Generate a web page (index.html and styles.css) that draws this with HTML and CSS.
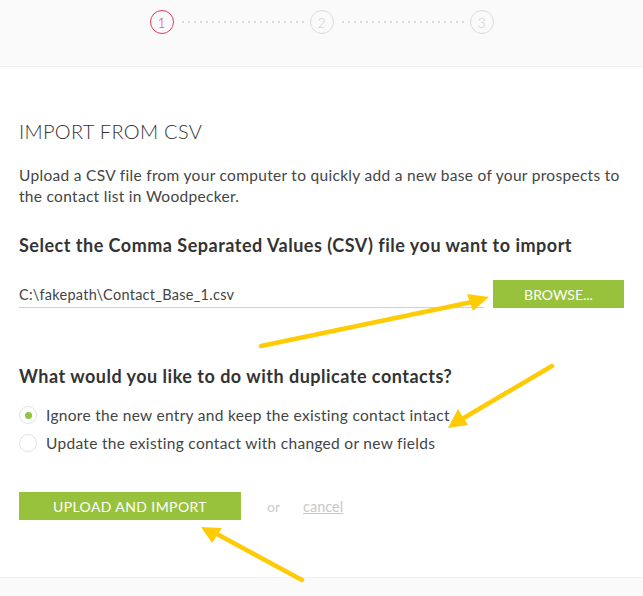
FILE: index.html
```html
<!DOCTYPE html>
<html>
<head>
<meta charset="utf-8">
<link rel="stylesheet" href="styles.css">
</head>
<body>
<div class="page">
  <header class="steps-bar">
    <div class="steps">
      <span class="step active">1</span>
      <span class="dots"></span>
      <span class="step">2</span>
      <span class="dots"></span>
      <span class="step">3</span>
    </div>
  </header>
  <main class="content">
    <h1 class="title">IMPORT FROM CSV</h1>
    <p class="intro">Upload a CSV file from your computer to quickly add a new base of your prospects to the contact list in Woodpecker.</p>
    <h2 class="heading">Select the Comma Separated Values (CSV) file you want to import</h2>
    <div class="file-row">
      <div class="file-input">C:\fakepath\Contact_Base_1.csv</div>
      <button class="btn browse">BROWSE...</button>
    </div>
    <h2 class="heading dup">What would you like to do with duplicate contacts?</h2>
    <div class="options">
      <label class="option"><span class="radio checked"></span>Ignore the new entry and keep the existing contact intact</label>
      <label class="option"><span class="radio"></span>Update the existing contact with changed or new fields</label>
    </div>
    <div class="actions">
      <button class="btn upload">UPLOAD AND IMPORT</button>
      <span class="or">or</span>
      <a class="cancel" href="#">cancel</a>
    </div>
  </main>
  <footer class="footer"></footer>
  <svg class="arrows" width="643" height="596" viewBox="0 0 643 596">
    <g stroke="#ffcb05" stroke-width="4.5" stroke-linecap="round" fill="none">
      <line x1="261" y1="346" x2="472" y2="302"/>
      <line x1="552" y1="366" x2="462" y2="419"/>
      <line x1="302" y1="580" x2="215" y2="533"/>
    </g>
    <g fill="#ffcb05">
      <polygon points="489,297 467,294 473,311"/>
      <polygon points="448,428 458,409 468,425"/>
      <polygon points="201,527 222,528 212,543"/>
    </g>
  </svg>
</div>
</body>
</html>
```
FILE: styles.css
```css
* { box-sizing: border-box; }
html, body { margin: 0; padding: 0; background: #fff; }
body {
  font-family: "Lato", "Liberation Sans", sans-serif;
  color: #333;
  width: 643px;
  height: 596px;
  overflow: hidden;
}
.page {
  position: relative;
  width: 643px;
  height: 596px;
  display: flex;
  flex-direction: column;
}
.steps-bar {
  height: 67px;
  background: #fafafa;
  border-bottom: 1px solid #f0f0f0;
  display: flex;
  justify-content: center;
  padding-top: 10px;
}
.steps {
  display: flex;
  align-items: center;
  height: 24px;
  gap: 6px;
}
.step {
  width: 24px;
  height: 24px;
  border-radius: 50%;
  border: 1.5px solid #dcdcdc;
  color: #cfcfcf;
  font-size: 14px;
  font-weight: 300;
  display: flex;
  align-items: center;
  justify-content: center;
}
.step.active {
  border-color: #e3365c;
  color: #e3365c;
}
.dots {
  width: 124px;
  height: 2px;
  background-image: radial-gradient(circle, #d8d8d8 0.9px, transparent 1px);
  background-size: 6px 2px;
  background-repeat: repeat-x;
}
.content {
  flex: 1;
  padding: 52px 19px 0 19px;
  display: flex;
  flex-direction: column;
}
.title {
  margin: 0;
  font-size: 20px;
  line-height: 24px;
  font-weight: 300;
  color: #333;
  letter-spacing: 0.3px;
}
.intro {
  margin: 22px 0 0 0;
  font-size: 15.5px;
  line-height: 21px;
  color: #444;
  font-weight: 400;
  letter-spacing: 0.3px;
}
.heading {
  margin: 27px 0 0 0;
  font-size: 18px;
  line-height: 22px;
  font-weight: 700;
  color: #333;
  letter-spacing: 0.5px;
}
.file-row {
  margin-top: 24px;
  display: flex;
  align-items: flex-end;
  gap: 9px;
}
.file-input {
  flex: 1;
  height: 28px;
  border-bottom: 1px solid #cfcfcf;
  font-size: 14.5px;
  line-height: 30px;
  color: #444;
  letter-spacing: 0.27px;
}
.btn {
  border: none;
  background: #99c23c;
  color: #fff;
  font-family: inherit;
  font-size: 14px;
  font-weight: 400;
  padding: 0;
  height: 28px;
  cursor: pointer;
}
.browse {
  width: 131px;
}
.heading.dup {
  margin-top: 57px;
}
.options {
  margin-top: 14px;
  display: flex;
  flex-direction: column;
}
.option {
  height: 28px;
  display: flex;
  align-items: center;
  gap: 9px;
  font-size: 15.5px;
  color: #444;
  letter-spacing: 0.3px;
}
.radio {
  width: 18px;
  height: 18px;
  border-radius: 50%;
  border: 1px solid #e2e2e2;
  display: flex;
  align-items: center;
  justify-content: center;
}
.radio.checked::after {
  content: "";
  width: 7px;
  height: 7px;
  border-radius: 50%;
  background: #8cc63f;
}
.actions {
  margin-top: 35px;
  display: flex;
  align-items: center;
}
.upload {
  width: 222px;
  letter-spacing: 0.4px;
}
.or {
  margin-left: 26px;
  font-size: 14px;
  color: #ccc;
}
.cancel {
  margin-left: 23px;
  font-size: 14.5px;
  color: #c8c8c8;
  text-decoration: underline;
}
.footer {
  height: 19px;
  background: #fafafa;
  border-top: 1px solid #f0f0f0;
}
.arrows {
  position: absolute;
  left: 0;
  top: 0;
  pointer-events: none;
}
```
